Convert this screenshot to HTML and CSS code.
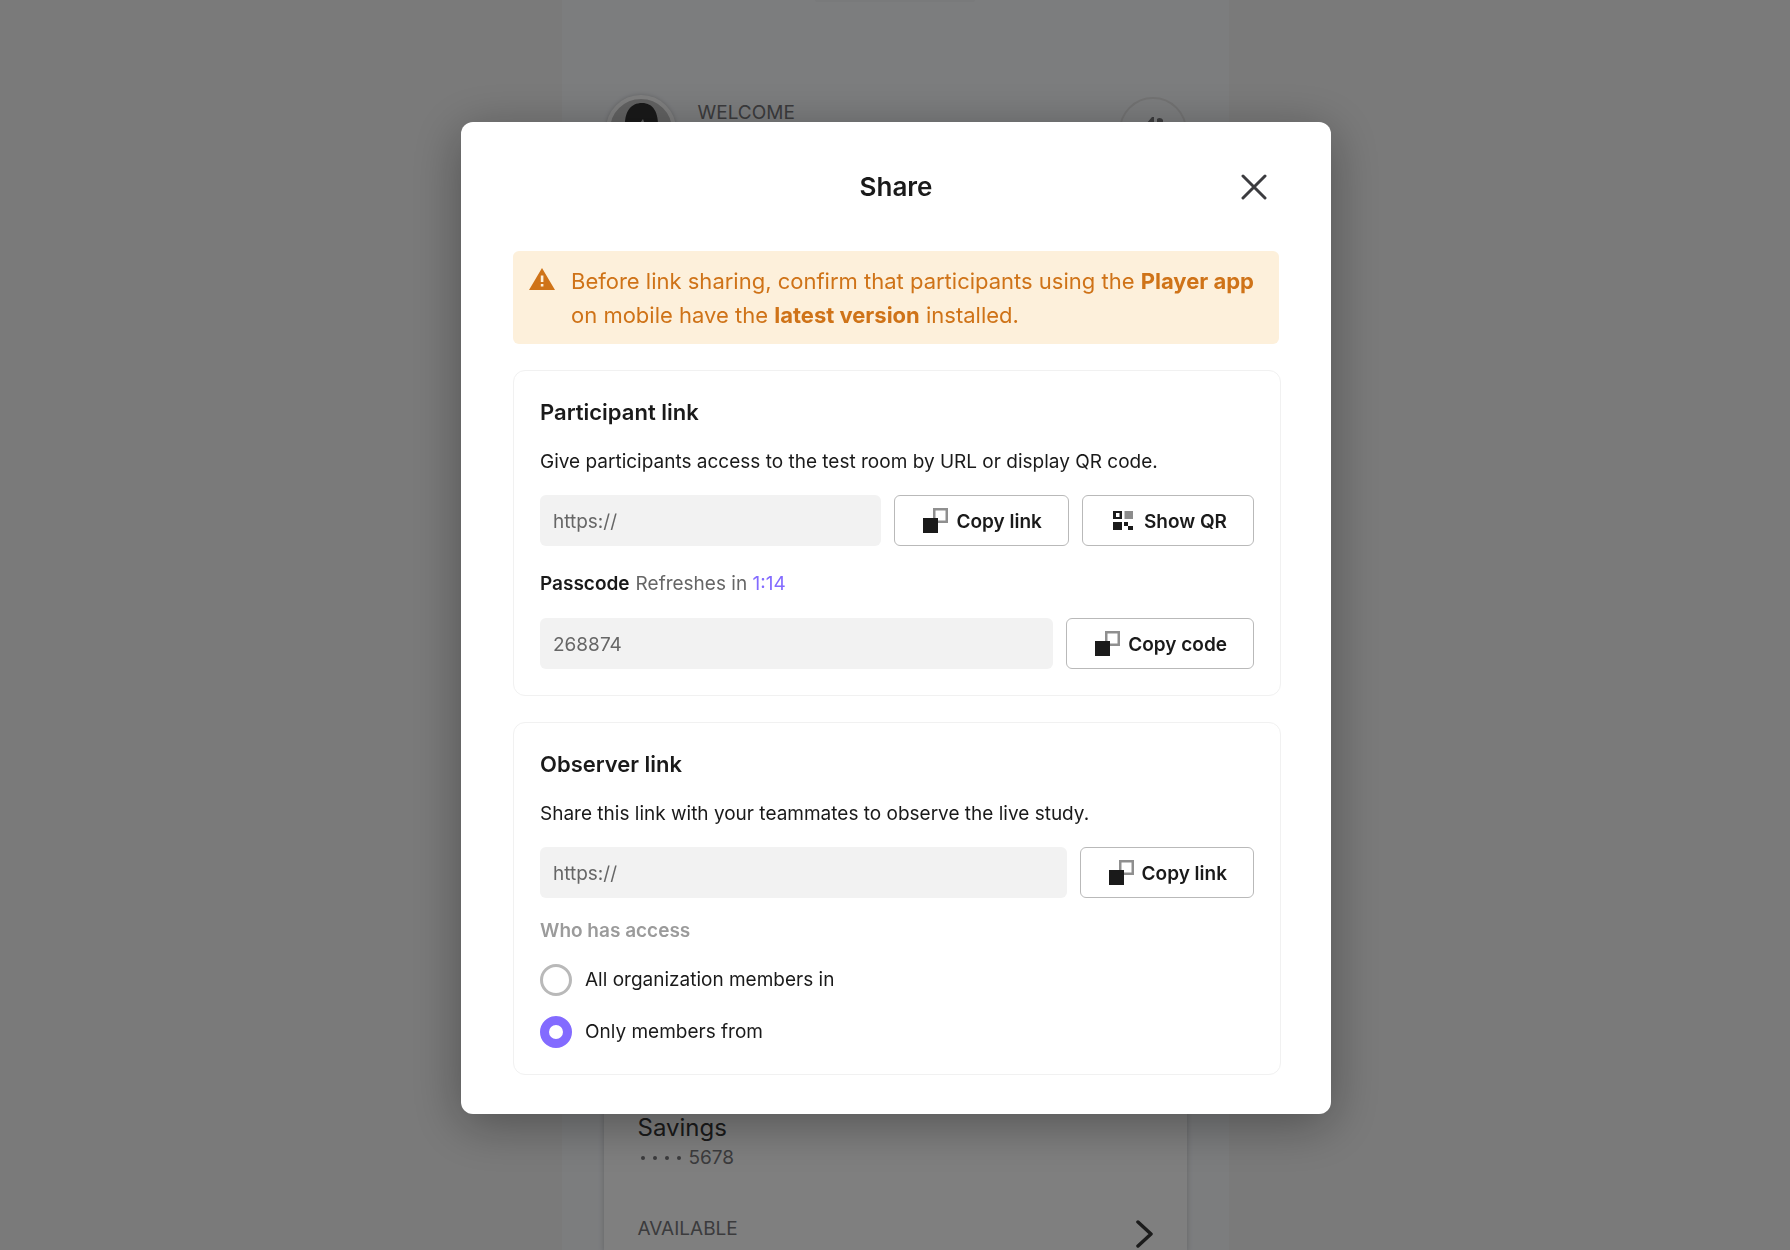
FILE: index.html
```html
<!DOCTYPE html>
<html lang="en">
<head>
<meta charset="utf-8">
<meta name="viewport" content="width=device-width, initial-scale=1">
<title>Share</title>
<link rel="stylesheet" href="styles.css">
</head>
<body>
<svg class="sprite" aria-hidden="true">
  <symbol id="icon-copy" viewBox="0 0 25 25">
    <rect x="11.250" y="1.250" width="12.500" height="12.500" fill="none" stroke="#8f8f8f" stroke-width="2.500"/>
    <rect x="0" y="10" width="15" height="15" fill="#1a1a1a"/>
  </symbol>
  <symbol id="icon-qr" viewBox="0 0 25 25">
    <path fill="#1a1a1a" fill-rule="evenodd" d="M2 3h9v8H2zM5 5v4h3.500V5zM2 14h9v8H2zM13 14h4v4h-4zM17 18h5v4h-5z"/>
    <rect x="13.500" y="3" width="8.500" height="8" fill="#8c8c8c"/>
  </symbol>
</svg>

<main class="prototype">
  <div class="notch"></div>
  <header class="welcome">
    <svg class="avatar" viewBox="0 0 70 70" aria-hidden="true">
      <circle cx="35" cy="35" r="33" fill="#c4c4c4" stroke="#fff" stroke-width="4"/>
      <path fill="#333" d="M19 34C18 16 25 8 36 8s17 9 16 26l-13-4-2-6-5 7z"/>
    </svg>
    <span class="welcome-text">WELCOME</span>
    <svg class="bell" viewBox="0 0 68 68" aria-hidden="true">
      <circle cx="34" cy="34" r="33" fill="none" stroke="#e6e6e6" stroke-width="2"/>
      <path fill="#7b7b7e" d="M27 27l6-7h2v9h-8zM38 22c2-2 5-1 6 1v6h-6z"/>
    </svg>
  </header>
  <section class="account">
    <h2 class="account-name">Savings</h2>
    <p class="account-number"><span class="dots" aria-hidden="true"><i></i><i></i><i></i><i></i></span>5678</p>
    <div class="account-foot">
      <span>AVAILABLE</span>
      <svg class="chevron" viewBox="0 0 17 28" aria-hidden="true"><path d="M2 2l13 12L2 26" fill="none" stroke="#363636" stroke-width="3.500" stroke-linecap="round" stroke-linejoin="round"/></svg>
    </div>
  </section>
</main>

<div class="overlay">
  <div class="modal" role="dialog" aria-modal="true" aria-labelledby="share-title">
    <header class="modal-head">
      <h1 class="modal-title" id="share-title">Share</h1>
      <button class="close" type="button" aria-label="Close">
        <svg viewBox="0 0 26 26" aria-hidden="true"><path d="M2 2l22 22M24 2L2 24" stroke="#3c3c3f" stroke-width="3" stroke-linecap="round"/></svg>
      </button>
    </header>

    <div class="alert" role="alert">
      <svg class="alert-icon" viewBox="0 0 26 22" aria-hidden="true"><path fill="#cf7318" fill-rule="evenodd" d="M13 0l13 22H0zM11.800 7.500v6.500h2.600V7.500zM11.800 16v2.600h2.600V16z"/></svg>
      <p class="alert-text">Before link sharing, confirm that participants using the <strong>Player app</strong><br>on mobile have the <strong>latest version</strong> installed.</p>
    </div>

    <section class="card">
      <h2 class="card-title">Participant link</h2>
      <p class="card-text">Give participants access to the test room by URL or display QR code.</p>
      <div class="row">
        <input class="field" type="text" value="https://" aria-label="Participant link" readonly>
        <button class="button" type="button"><svg class="icon" aria-hidden="true"><use href="#icon-copy"/></svg>Copy link</button>
        <button class="button" type="button"><svg class="icon" aria-hidden="true"><use href="#icon-qr"/></svg>Show QR</button>
      </div>
      <div class="passcode">
        <label class="passcode-label" for="passcode">Passcode</label>
        <span>Refreshes in <span class="timer">1:14</span></span>
      </div>
      <div class="row">
        <input class="field" id="passcode" type="text" value="268874" readonly>
        <button class="button" type="button"><svg class="icon" aria-hidden="true"><use href="#icon-copy"/></svg>Copy code</button>
      </div>
    </section>

    <section class="card">
      <h2 class="card-title">Observer link</h2>
      <p class="card-text">Share this link with your teammates to observe the live study.</p>
      <div class="row">
        <input class="field" type="text" value="https://" aria-label="Observer link" readonly>
        <button class="button" type="button"><svg class="icon" aria-hidden="true"><use href="#icon-copy"/></svg>Copy link</button>
      </div>
      <fieldset class="access">
        <legend class="access-title">Who has access</legend>
        <label class="option"><input class="radio" type="radio" name="access">All organization members in</label>
        <label class="option"><input class="radio" type="radio" name="access" checked>Only members from</label>
      </fieldset>
    </section>
  </div>
</div>
</body>
</html>
```
FILE: styles.css
```css
*, *::before, *::after { box-sizing: border-box; }

body {
  margin: 0;
  height: 100vh;
  overflow: hidden;
  background: #f5f5f5;
  color: #1a1a1a;
  font: 400 19px/28px Inter, "Liberation Sans", sans-serif;
}

h1, h2, p { margin: 0; }

.sprite { position: absolute; width: 0; height: 0; }

/* Prototype behind the dialog */
.prototype {
  display: flex;
  flex-direction: column;
  width: 667px;
  max-width: 100%;
  height: 100vh;
  margin: 0 auto;
  padding: 0 42px;
  overflow: hidden;
  background: #f8fafd;
  color: #77777a;
}

.notch {
  flex: none;
  align-self: center;
  width: 160px;
  height: 2px;
  border-radius: 0 0 8px 8px;
  background: #f3f4f6;
}

.welcome {
  display: flex;
  align-items: flex-start;
  margin-top: 93px;
  padding: 0 0 0 2px;
}

.avatar { width: 70px; height: 70px; filter: drop-shadow(0 0 2px rgba(0, 0, 0, 0.2)); }
.welcome-text { flex: 1; margin: 4px 0 0 22px; }
.bell { width: 68px; height: 68px; margin-top: 2px; }

.account {
  flex: 1 0 auto;
  margin-top: 906px;
  padding: 41px 34px 0;
  background: #fff;
  box-shadow: 0 2px 6px rgba(0, 0, 0, 0.2);
}

.account-name { color: #363636; font-size: 24px; font-weight: 400; line-height: 32px; }
.account-number { display: flex; align-items: center; gap: 8px; }
.dots { display: flex; gap: 8px; padding-left: 3px; }
.dots i { width: 4px; height: 4px; border-radius: 50%; background: #77777a; }

.account-foot {
  display: flex;
  align-items: flex-start;
  justify-content: space-between;
  margin-top: 43px;
}

.chevron { width: 17px; height: 28px; margin-top: 5px; }

/* Dialog */
.overlay {
  position: fixed;
  inset: 0;
  display: flex;
  align-items: flex-start;
  justify-content: center;
  padding: 122px 24px 24px 26px;
  overflow: auto;
  background: rgba(0, 0, 0, 0.5);
}

.modal {
  width: 870px;
  max-width: 100%;
  padding: 40px 50px 39px 52px;
  border-radius: 12px;
  background: #fff;
  box-shadow: 0 10px 50px rgba(0, 0, 0, 0.35);
}

.modal-head {
  display: grid;
  grid-template-columns: 50px 1fr 50px;
  align-items: center;
  margin: 0 2px 39px 0;
}

.modal-title {
  grid-column: 2;
  font-size: 26px;
  font-weight: 600;
  line-height: 50px;
  text-align: center;
}

.close {
  display: grid;
  place-items: center;
  width: 50px;
  height: 50px;
  padding: 0;
  border: 0;
  background: none;
}

.close svg { width: 26px; height: 26px; }

.alert {
  display: flex;
  gap: 16px;
  margin: 0 2px 26px 0;
  padding: 13px 0 12px 16px;
  border-radius: 6px;
  background: #fdf0db;
  color: #cf7318;
}

.alert-icon { flex: none; width: 26px; height: 22px; margin-top: 4px; }
.alert-text { font-size: 22px; line-height: 34px; }
.alert-text strong { font-weight: 700; }

.card {
  padding: 25px 26px 26px;
  border: 1px solid #f1f1f1;
  border-radius: 12px;
}

.card + .card { margin-top: 26px; }
.card-title { font-size: 22px; font-weight: 600; line-height: 32px; }
.card-text { margin: 20px 0 19px; }

.row { display: flex; gap: 13px; }

.field {
  flex: 1;
  min-width: 0;
  height: 51px;
  padding: 2px 13px 0;
  border: 0;
  border-radius: 6px;
  background: #f2f2f2;
  color: #666;
  font: inherit;
}

.button {
  display: flex;
  align-items: center;
  gap: 8px;
  height: 51px;
  padding: 2px 26px 0 28px;
  border: 1px solid #b9b9b9;
  border-radius: 6px;
  background: #fff;
  color: #1a1a1a;
  font: inherit;
  font-weight: 600;
  white-space: nowrap;
}

.icon { width: 25px; height: 25px; margin-bottom: 2px; }

.passcode {
  display: flex;
  gap: 6px;
  margin: 24px 0 20px;
  color: #666;
}

.passcode-label { color: #1a1a1a; font-weight: 600; }
.timer { color: #836bff; }

.access {
  display: flex;
  flex-direction: column;
  gap: 20px;
  margin: 19px 0 0;
  padding: 0;
  border: 0;
}

.access-title {
  margin-bottom: 19px;
  padding: 0;
  color: #9b9b9b;
  font-weight: 600;
}

.option { display: flex; align-items: center; gap: 13px; line-height: 32px; }

.radio {
  appearance: none;
  width: 32px;
  height: 32px;
  margin: 0;
  border: 3px solid #b9b9b9;
  border-radius: 50%;
  background: #fff;
}

.radio:checked { border: 9px solid #836bff; }
```
